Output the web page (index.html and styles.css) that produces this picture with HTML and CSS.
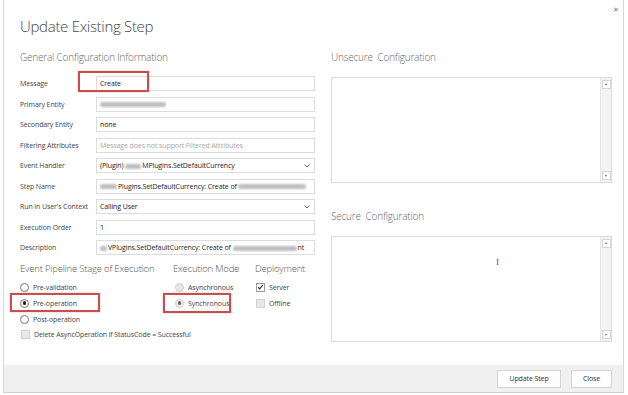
FILE: index.html
```html
<!DOCTYPE html>
<html lang="en">
<head>
    <meta charset="UTF-8">
    <title>Update Existing Step</title>
    <link rel="stylesheet" href="styles.css">
</head>
<body>
    <div class="dialog">
        <span class="close-x">&#x2715;</span>
        <div class="main">
            <div class="left">
                <h1 class="title">Update Existing Step</h1>
                <h2 class="section">General Configuration Information</h2>

                <div class="form">
                    <span class="mark mark-message"></span>

                    <label>Message</label>
                    <div class="field">Create</div>

                    <label>Primary Entity</label>
                    <div class="field"><span class="blur blur-66"></span></div>

                    <label>Secondary Entity</label>
                    <div class="field">none</div>

                    <label>Filtering Attributes</label>
                    <div class="field placeholder">Message does not support Filtered Attributes</div>

                    <label>Event Handler</label>
                    <div class="field select">(Plugin) <span class="blur blur-18"></span>MPlugins.SetDefaultCurrency
                        <svg class="chevron" width="6" height="4" viewBox="0 0 6 4"><polyline points="0.5,0.5 3,3 5.5,0.5" fill="none" stroke="#555" stroke-width="0.9"/></svg>
                    </div>

                    <label>Step Name</label>
                    <div class="field"><span class="blur blur-17"></span>Plugins.SetDefaultCurrency: Create of <span class="blur blur-68"></span></div>

                    <label>Run in User's Context</label>
                    <div class="field select">Calling User
                        <svg class="chevron" width="6" height="4" viewBox="0 0 6 4"><polyline points="0.5,0.5 3,3 5.5,0.5" fill="none" stroke="#555" stroke-width="0.9"/></svg>
                    </div>

                    <label>Execution Order</label>
                    <div class="field">1</div>

                    <label>Description</label>
                    <div class="field"><span class="blur blur-7"></span>VPlugins.SetDefaultCurrency: Create of <span class="blur blur-64"></span>nt</div>
                </div>

                <div class="options">
                    <div class="opt-col col-stage">
                        <h3>Event Pipeline Stage of Execution</h3>
                        <div class="opt"><span class="radio"></span>Pre-validation</div>
                        <div class="opt"><span class="mark mark-preop"></span><span class="radio on"></span>Pre-operation</div>
                        <div class="opt"><span class="radio"></span>Post-operation</div>
                        <div class="opt opt-short"><span class="check off"></span>Delete AsyncOperation if StatusCode = Successful</div>
                    </div>
                    <div class="opt-col col-mode">
                        <h3>Execution Mode</h3>
                        <div class="opt"><span class="radio off"></span>Asynchronous</div>
                        <div class="opt"><span class="mark mark-sync"></span><span class="radio on dim"></span>Synchronous</div>
                    </div>
                    <div class="opt-col col-deploy">
                        <h3>Deployment</h3>
                        <div class="opt"><span class="check"><svg width="8" height="8" viewBox="0 0 8 8"><polyline points="1.2,4.2 3.1,6.2 6.8,1.4" fill="none" stroke="#222" stroke-width="1.2"/></svg></span>Server</div>
                        <div class="opt"><span class="check off"></span>Offline</div>
                    </div>
                </div>
            </div>

            <div class="right">
                <h2 class="section">Unsecure&nbsp; Configuration</h2>
                <div class="textbox">
                    <div class="scrollbar">
                        <span class="arrow up"></span>
                        <span class="arrow down"></span>
                    </div>
                </div>

                <h2 class="section secure">Secure&nbsp; Configuration</h2>
                <div class="textbox">
                    <span class="cursor">I</span>
                    <div class="scrollbar">
                        <span class="arrow up"></span>
                        <span class="arrow down"></span>
                    </div>
                </div>
            </div>
        </div>

        <div class="footer">
            <button class="button">Update Step</button>
            <button class="button button-close">Close</button>
        </div>
    </div>
</body>
</html>
```

FILE: styles.css
```css
html, body {
    margin: 0;
    padding: 0;
    background: #fff;
    overflow: hidden;
}

body {
    font-family: "Open Sans", "Segoe UI", Arial, sans-serif;
    color: #333;
}

.dialog {
    position: relative;
    margin-left: 3px;
    width: 619px;
    height: 392px;
    border-left: 1px solid #d8d8d8;
    border-right: 1px solid #d8d8d8;
    border-bottom: 1px solid #cfcfcf;
    display: flex;
    flex-direction: column;
}

.close-x {
    position: absolute;
    right: 4px;
    top: 5px;
    font-size: 7px;
    color: #777;
}

.main {
    display: flex;
    flex: 1;
}

.left {
    width: 296px;
    padding-left: 16px;
}

.right {
    width: 281px;
    margin-left: 15px;
}

.title {
    margin: 16px 0 0;
    font-size: 15px;
    font-weight: 300;
    line-height: 20px;
    color: #444;
    letter-spacing: -0.3px;
}

.section {
    margin: 14px 0 0;
    font-size: 10px;
    font-weight: 300;
    line-height: 14px;
    color: #666;
    letter-spacing: -0.2px;
}

.right .section {
    margin-top: 50px;
}

.right .section.secure {
    margin-top: 26px;
}

/* form rows */

.form {
    position: relative;
    margin-top: 12px;
    display: grid;
    grid-template-columns: 76px 219px;
    grid-auto-rows: 15px;
    row-gap: 5.5px;
}

.form label {
    font-size: 7px;
    line-height: 15px;
    color: #444;
    white-space: nowrap;
    letter-spacing: -0.1px;
}

.field {
    position: relative;
    border: 1px solid #dcdcdc;
    box-sizing: border-box;
    padding-left: 3px;
    font-size: 7px;
    line-height: 13px;
    color: #222;
    white-space: nowrap;
    overflow: hidden;
    letter-spacing: -0.1px;
}

.field.placeholder {
    color: #a8a8a8;
}

.chevron {
    position: absolute;
    right: 4px;
    top: 5px;
}

.blur {
    display: inline-block;
    height: 5px;
    vertical-align: middle;
    background: #bdbdbd;
    border-radius: 2px;
    filter: blur(1.2px);
    margin-right: 1px;
}

.blur-7 { width: 7px; }
.blur-17 { width: 17px; }
.blur-18 { width: 16px; }
.blur-64 { width: 64px; }
.blur-66 { width: 66px; }
.blur-68 { width: 68px; }

/* red highlight boxes */

.mark {
    position: absolute;
    border: 2px solid #cf4c4c;
    box-shadow: 0 0 2px rgba(0, 0, 0, 0.25);
    box-sizing: border-box;
    pointer-events: none;
    z-index: 2;
}

.mark-message {
    left: 58px;
    top: -5px;
    width: 71px;
    height: 21px;
}

.mark-preop {
    left: -10px;
    top: -2px;
    width: 90px;
    height: 19px;
}

.mark-sync {
    left: -10px;
    top: -2px;
    width: 68px;
    height: 20px;
}

/* pipeline / mode / deployment */

.options {
    display: flex;
    margin-top: 7px;
}

.opt-col h3 {
    margin: 0 0 3px;
    font-size: 9.5px;
    font-weight: 300;
    line-height: 14px;
    color: #555;
    white-space: nowrap;
    letter-spacing: -0.2px;
}

.col-stage {
    width: 153px;
}

.col-mode {
    width: 82px;
}

.opt {
    position: relative;
    display: flex;
    align-items: center;
    height: 16px;
    font-size: 7px;
    color: #444;
    white-space: nowrap;
    letter-spacing: -0.1px;
}

.opt-short {
    height: 14px;
}

.radio {
    flex-shrink: 0;
    width: 7px;
    height: 7px;
    border: 1px solid #777;
    border-radius: 50%;
    margin-right: 4px;
    display: flex;
    align-items: center;
    justify-content: center;
    background: #fff;
}

.radio.on::after {
    content: "";
    width: 3.5px;
    height: 3.5px;
    border-radius: 50%;
    background: #222;
}

.radio.off {
    border-color: #ccc;
    background: #e6e6e6;
}

.col-mode .radio {
    margin-left: 2px;
}

.col-mode .radio.dim {
    border-color: #ccc;
    background: #eee;
}

.col-mode .radio.dim::after {
    background: #666;
}

.check {
    flex-shrink: 0;
    width: 7px;
    height: 7px;
    border: 1px solid #999;
    margin-right: 4px;
    margin-left: 1px;
    display: flex;
    align-items: center;
    justify-content: center;
    background: #fff;
}

.check.off {
    border-color: #d0d0d0;
    background: #e8e8e8;
}

/* text areas */

.textbox {
    position: relative;
    margin-top: 13px;
    height: 106px;
    border: 1px solid #dcdcdc;
    box-sizing: border-box;
}

.scrollbar {
    position: absolute;
    right: 0;
    top: 0;
    bottom: 0;
    width: 10px;
    background: #f3f3f3;
    border-left: 1px solid #e6e6e6;
}

.arrow {
    position: absolute;
    left: 1px;
    width: 7px;
    height: 7px;
    border: 1px solid #d6d6d6;
    background: #fff;
}

.arrow::after {
    content: "";
    position: absolute;
    left: 2px;
    border-left: 1.5px solid transparent;
    border-right: 1.5px solid transparent;
}

.arrow.up {
    top: 2px;
}

.arrow.up::after {
    top: 2px;
    border-bottom: 2px solid #666;
}

.arrow.down {
    bottom: 2px;
}

.arrow.down::after {
    top: 3px;
    border-top: 2px solid #666;
}

.cursor {
    position: absolute;
    left: 164px;
    top: 20px;
    font-family: "Liberation Serif", serif;
    font-size: 9px;
    color: #555;
}

/* footer */

.footer {
    height: 27px;
    background: #f0f0f0;
    display: flex;
    justify-content: flex-end;
    align-items: center;
    gap: 10px;
    padding-right: 11px;
}

.button {
    height: 18px;
    padding: 0;
    width: 64px;
    border: 1px solid #d4d4d4;
    background: #fff;
    font-family: inherit;
    font-size: 7px;
    color: #333;
    letter-spacing: -0.1px;
}

.button-close {
    width: 41px;
}
```
